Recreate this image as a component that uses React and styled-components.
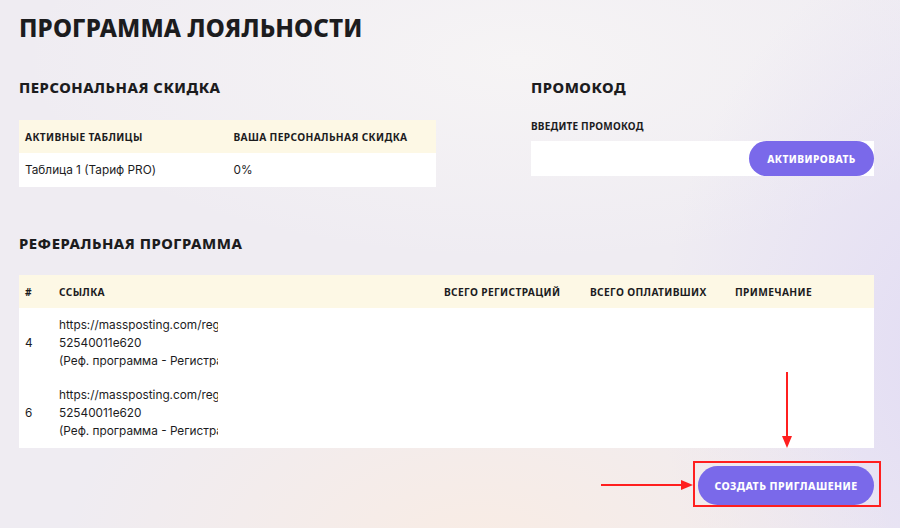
import styled, { createGlobalStyle } from 'styled-components'

const GlobalStyle = createGlobalStyle`
  html, body {
    margin: 0;
    padding: 0;
  }
  body {
    width: 900px;
    height: 528px;
    overflow: hidden;
    color: #1c1c1e;
    font-family: "Inter", "Liberation Sans", sans-serif;
    background:
      radial-gradient(ellipse 420px 260px at 480px 560px, rgba(250, 236, 226, 0.9), rgba(250, 236, 226, 0) 100%),
      radial-gradient(ellipse 300px 420px at 960px 360px, rgba(226, 220, 244, 1), rgba(226, 220, 244, 0) 100%),
      radial-gradient(ellipse 500px 200px at 520px 60px, rgba(246, 244, 245, 1), rgba(246, 244, 245, 0) 100%),
      linear-gradient(180deg, #efecf2 0%, #efecf2 100%);
  }
`

const Page = styled.div`
  position: relative;
  box-sizing: border-box;
  width: 900px;
  height: 528px;
  padding: 13px 26px 0 19px;
`

const Title = styled.h1`
  margin: 0;
  font-family: "Noto Sans", sans-serif;
  font-weight: 800;
  font-size: 24.3px;
  line-height: 30px;
  letter-spacing: 0.1px;
  text-transform: uppercase;
`

const TopGrid = styled.div`
  display: grid;
  grid-template-columns: 417px 1fr;
  column-gap: 95px;
  margin-top: 35px;
`

const Section = styled.section`
  display: flex;
  flex-direction: column;
`

const Heading = styled.h2`
  margin: 0;
  font-family: "Noto Sans", sans-serif;
  font-weight: 800;
  font-size: 14.8px;
  line-height: 18px;
  letter-spacing: 0.5px;
  text-transform: uppercase;
`

const Table = styled.table`
  width: 100%;
  border-collapse: collapse;
  table-layout: fixed;
  margin-top: ${p => p.$offset || 24}px;
`

const HeadCell = styled.th`
  box-sizing: border-box;
  background: #fdf8e5;
  height: 33px;
  padding: 0 6px;
  text-align: left;
  font-family: "Noto Sans", sans-serif;
  font-weight: 700;
  font-size: 10.2px;
  letter-spacing: 0.35px;
  text-transform: uppercase;
  white-space: nowrap;
  width: ${p => p.$w || 'auto'};
`

const Cell = styled.td`
  box-sizing: border-box;
  background: #fff;
  height: ${p => p.$h || 34}px;
  padding: 0 6px;
  font-size: 11.8px;
  line-height: 18px;
  vertical-align: middle;
`

const LinkText = styled.div`
  width: 159px;
  overflow: hidden;
  white-space: nowrap;
`

const Label = styled.div`
  margin-top: 23px;
  font-family: "Noto Sans", sans-serif;
  font-weight: 700;
  font-size: 10px;
  line-height: 14px;
  text-transform: uppercase;
  letter-spacing: 0.2px;
`

const PromoRow = styled.div`
  display: flex;
  margin-top: 8px;
  height: 35px;
  background: #fff;
`

const Input = styled.input`
  flex: 1;
  min-width: 0;
  border: none;
  background: transparent;
  padding: 0 10px;
  &:focus { outline: none; }
`

const PillButton = styled.button`
  border: none;
  border-radius: 20px;
  background: #7a69ea;
  color: #fff;
  font-family: "Noto Sans", sans-serif;
  font-weight: 800;
  font-size: ${p => p.$fs || 10}px;
  letter-spacing: 0.45px;
  text-transform: uppercase;
  cursor: pointer;
  width: ${p => p.$w}px;
  height: ${p => p.$h}px;
  padding: 0;
`

const RefSection = styled.section`
  margin-top: 47px;
`

const Footer = styled.div`
  display: flex;
  justify-content: flex-end;
  margin-top: 18px;
`

const Highlight = styled.div`
  position: relative;
  &::after {
    content: '';
    position: absolute;
    left: -5px;
    right: -7px;
    top: -5px;
    bottom: -2px;
    border: 2px solid #ff1f1f;
    pointer-events: none;
  }
`

const Arrow = styled.svg`
  position: absolute;
  overflow: visible;
  left: ${p => p.$x}px;
  top: ${p => p.$y}px;
`

const refs = [
  { id: 4 },
  { id: 6 },
]

const App = () => (
  <>
    <GlobalStyle />
    <Page>
      <Title>Программа лояльности</Title>

      <TopGrid>
        <Section>
          <Heading>Персональная скидка</Heading>
          <Table>
            <thead>
              <tr>
                <HeadCell>Активные таблицы</HeadCell>
                <HeadCell>Ваша персональная скидка</HeadCell>
              </tr>
            </thead>
            <tbody>
              <tr>
                <Cell>Таблица 1 (Тариф PRO)</Cell>
                <Cell>0%</Cell>
              </tr>
            </tbody>
          </Table>
        </Section>

        <Section>
          <Heading>Промокод</Heading>
          <Label>Введите промокод</Label>
          <PromoRow>
            <Input type="text" />
            <PillButton $w={125} $h={35} $fs={10.2}>Активировать</PillButton>
          </PromoRow>
        </Section>
      </TopGrid>

      <RefSection>
        <Heading>Реферальная программа</Heading>
        <Table $offset={23}>
          <thead>
            <tr>
              <HeadCell $w="34px">#</HeadCell>
              <HeadCell $w="385px">Ссылка</HeadCell>
              <HeadCell $w="146px">Всего регистраций</HeadCell>
              <HeadCell $w="145px">Всего оплативших</HeadCell>
              <HeadCell>Примечание</HeadCell>
            </tr>
          </thead>
          <tbody>
            {refs.map(r => (
              <tr key={r.id}>
                <Cell $h={70}>{r.id}</Cell>
                <Cell $h={70}>
                  <LinkText>https://massposting.com/register?ref=</LinkText>
                  <LinkText>52540011e620</LinkText>
                  <LinkText>(Реф. программа - Регистрация)</LinkText>
                </Cell>
                <Cell $h={70}></Cell>
                <Cell $h={70}></Cell>
                <Cell $h={70}></Cell>
              </tr>
            ))}
          </tbody>
        </Table>
      </RefSection>

      <Footer>
        <Highlight>
          <PillButton $w={176} $h={39} $fs={10.5}>Создать приглашение</PillButton>
        </Highlight>
      </Footer>

      {/* annotation arrows */}
      <Arrow $x={780} $y={372} width="14" height="76">
        <line x1="7" y1="0" x2="7" y2="66" stroke="#ff1f1f" strokeWidth="2" />
        <polygon points="2,64 12,64 7,76" fill="#ff1f1f" />
      </Arrow>
      <Arrow $x={601} $y={478} width="92" height="14">
        <line x1="0" y1="7" x2="82" y2="7" stroke="#ff1f1f" strokeWidth="2" />
        <polygon points="80,2 80,12 92,7" fill="#ff1f1f" />
      </Arrow>
    </Page>
  </>
)

export default App
